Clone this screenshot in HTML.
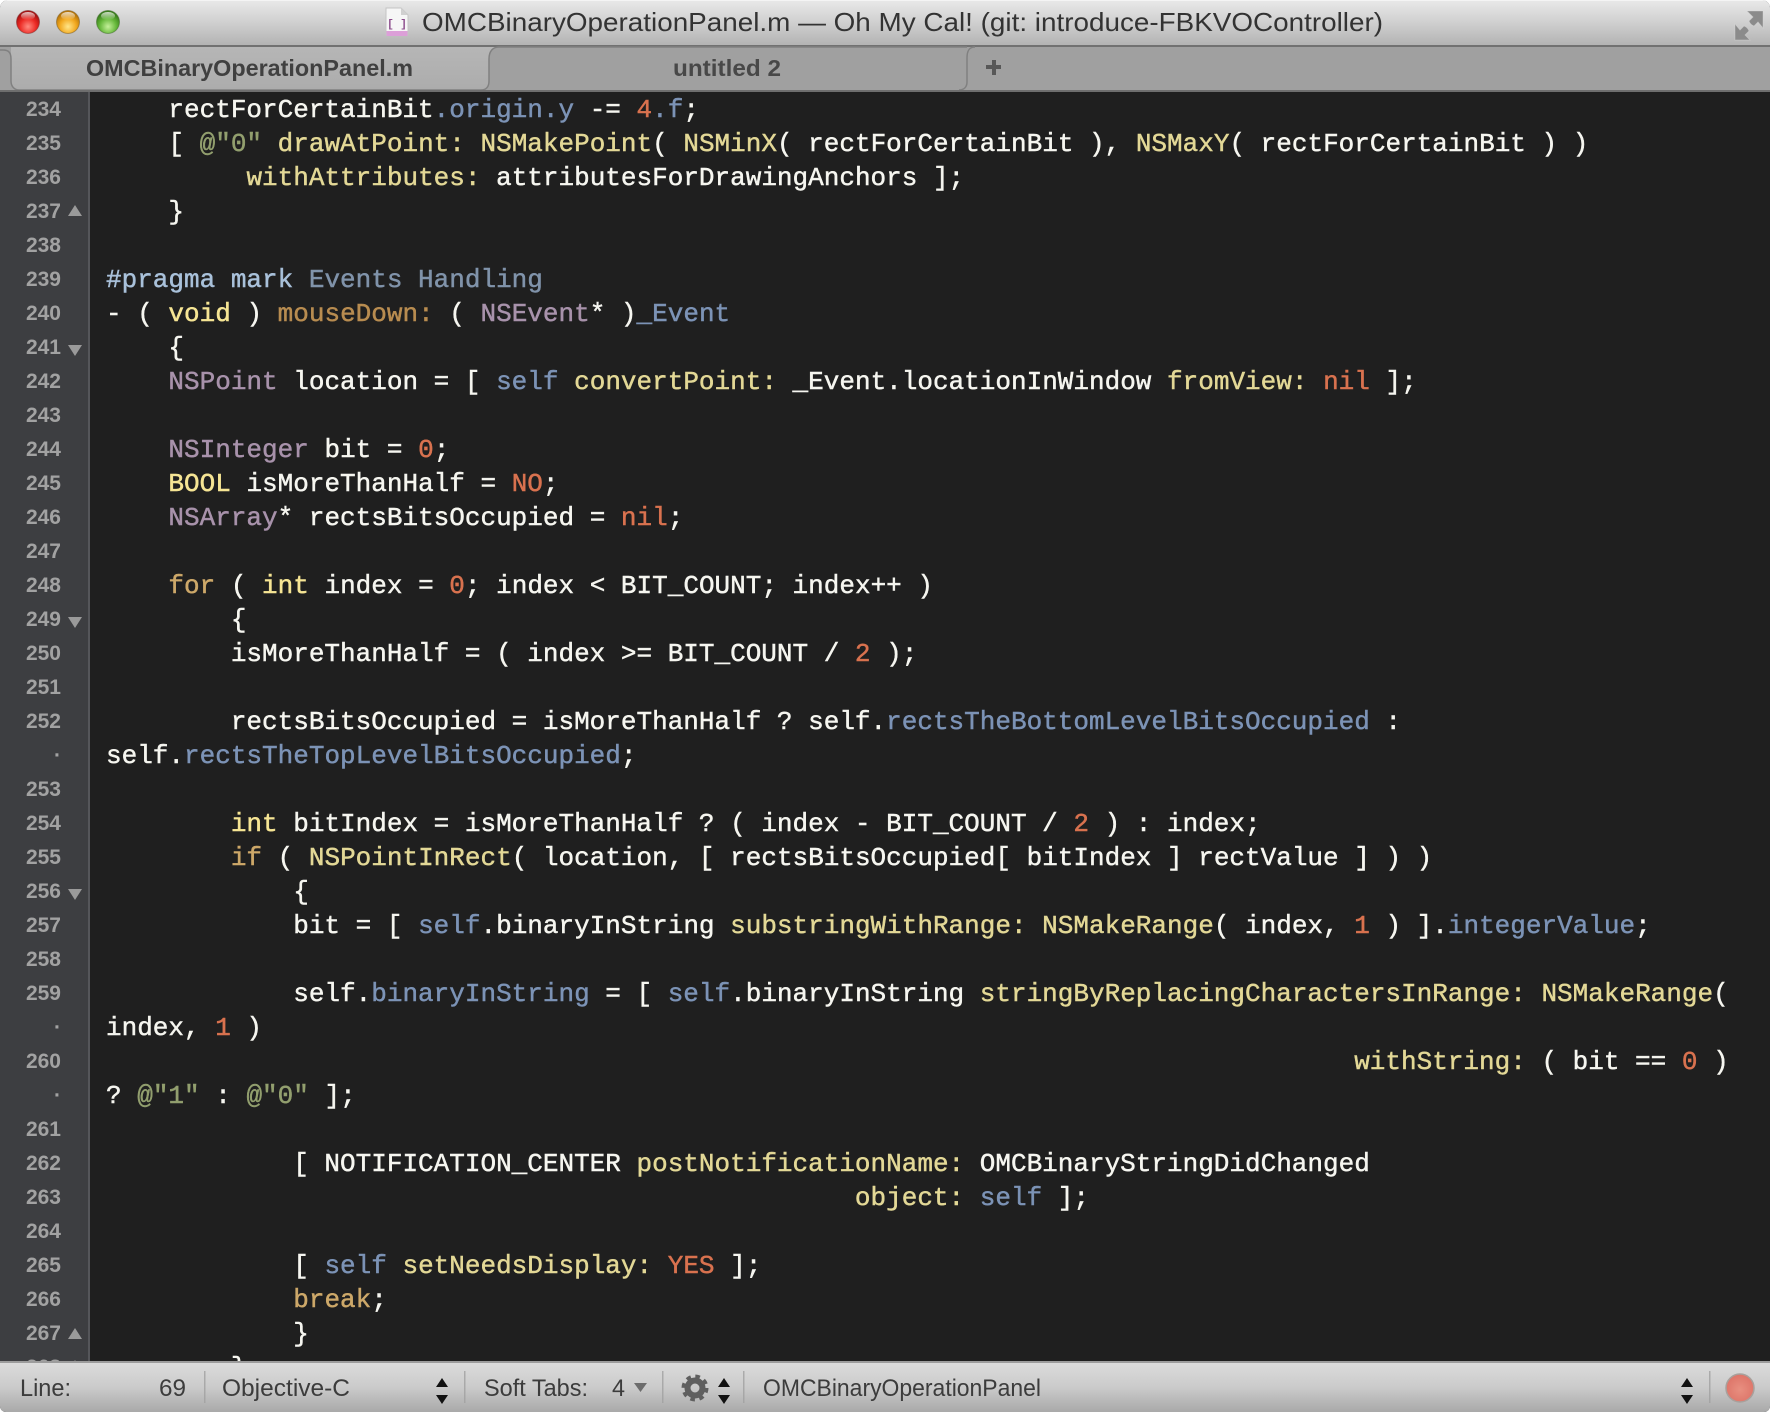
<!DOCTYPE html>
<html><head><meta charset="utf-8"><title>OMCBinaryOperationPanel.m</title>
<style>
html,body{margin:0;padding:0;background:#fff}
#w{position:relative;width:1770px;height:1412px;overflow:hidden;background:#1f1f1f;border-radius:8px 8px 6px 6px}
#g{position:absolute;left:0;top:91px;width:88px;height:1271px;background:#3d3e41;border-right:2px solid #55565a}
pre{margin:0;position:absolute;line-height:34px;white-space:pre}
#n{left:-1px;top:2px;width:62px;text-align:right;font:bold 21px/34px "Liberation Sans",sans-serif;color:#a2a2a2;filter:blur(.35px)}
#c{left:106px;top:93px;font-family:"Liberation Mono",monospace;font-size:26px;color:#f6f6f0;-webkit-text-stroke:.45px currentColor;filter:blur(.35px)}
.y{color:#e3d896}.k{color:#f6e594}.m{color:#b88c50}.p{color:#a892ab}.o{color:#d9724f}.b{color:#7c93b6}.s{color:#929f6e}.f{color:#cda869}.h{color:#a9c1da}.e{color:#8093aa}
svg{position:absolute;left:0;top:0}
.t{font-family:"Liberation Sans",sans-serif}
</style></head><body><div id="w">
<div id="g"><pre id="n">234
235
236
237
238
239
240
241
242
243
244
245
246
247
248
249
250
251
252
·
253
254
255
256
257
258
259
·
260
·
261
262
263
264
265
266
267
268</pre></div>
<pre id="c">    rectForCertainBit<span class="b">.origin.y</span> -= <span class="o">4</span><span class="b">.f</span>;
    [ <span class="s">@"0"</span> <span class="y">drawAtPoint: NSMakePoint</span>( <span class="y">NSMinX</span>( rectForCertainBit ), <span class="y">NSMaxY</span>( rectForCertainBit ) )
         <span class="y">withAttributes:</span> attributesForDrawingAnchors ];
    }

<span class="h">#pragma mark</span> <span class="e">Events Handling</span>
- ( <span class="k">void</span> ) <span class="m">mouseDown:</span> ( <span class="p">NSEvent</span>* )<span class="b">_Event</span>
    {
    <span class="p">NSPoint</span> location = [ <span class="b">self</span> <span class="y">convertPoint:</span> _Event.locationInWindow <span class="y">fromView:</span> <span class="o">nil</span> ];

    <span class="p">NSInteger</span> bit = <span class="o">0</span>;
    <span class="k">BOOL</span> isMoreThanHalf = <span class="o">NO</span>;
    <span class="p">NSArray</span>* rectsBitsOccupied = <span class="o">nil</span>;

    <span class="f">for</span> ( <span class="k">int</span> index = <span class="o">0</span>; index &lt; BIT_COUNT; index++ )
        {
        isMoreThanHalf = ( index &gt;= BIT_COUNT / <span class="o">2</span> );

        rectsBitsOccupied = isMoreThanHalf ? self.<span class="b">rectsTheBottomLevelBitsOccupied</span> :
self.<span class="b">rectsTheTopLevelBitsOccupied</span>;

        <span class="k">int</span> bitIndex = isMoreThanHalf ? ( index - BIT_COUNT / <span class="o">2</span> ) : index;
        <span class="f">if</span> ( <span class="y">NSPointInRect</span>( location, [ rectsBitsOccupied[ bitIndex ] rectValue ] ) )
            {
            bit = [ <span class="b">self</span>.binaryInString <span class="y">substringWithRange: NSMakeRange</span>( index, <span class="o">1</span> ) ].<span class="b">integerValue</span>;

            self.<span class="b">binaryInString</span> = [ <span class="b">self</span>.binaryInString <span class="y">stringByReplacingCharactersInRange: NSMakeRange</span>(
index, <span class="o">1</span> )
                                                                                <span class="y">withString:</span> ( bit == <span class="o">0</span> )
? <span class="s">@"1"</span> : <span class="s">@"0"</span> ];

            [ NOTIFICATION_CENTER <span class="y">postNotificationName:</span> OMCBinaryStringDidChanged
                                                <span class="y">object:</span> <span class="b">self</span> ];

            [ <span class="b">self</span> <span class="y">setNeedsDisplay:</span> <span class="o">YES</span> ];
            <span class="f">break</span>;
            }
        }</pre>
<svg width="1770" height="1412" viewBox="0 0 1770 1412">
<defs>
<linearGradient id="tb" x1="0" y1="0" x2="0" y2="1"><stop offset="0" stop-color="#e9e9e9"/><stop offset=".5" stop-color="#cfcfcf"/><stop offset="1" stop-color="#b2b2b2"/></linearGradient>
<linearGradient id="at" x1="0" y1="0" x2="0" y2="1"><stop offset="0" stop-color="#b6b6b6"/><stop offset="1" stop-color="#acacac"/></linearGradient>
<linearGradient id="sb" x1="0" y1="0" x2="0" y2="1"><stop offset="0" stop-color="#dcdcdc"/><stop offset=".5" stop-color="#cbcbcb"/><stop offset="1" stop-color="#a9a9a9"/></linearGradient>
<radialGradient id="r" cx=".5" cy=".7" r=".6"><stop offset="0" stop-color="#ff8a80"/><stop offset=".6" stop-color="#ec2a24"/><stop offset="1" stop-color="#a81212"/></radialGradient>
<radialGradient id="a" cx=".5" cy=".7" r=".6"><stop offset="0" stop-color="#ffe68a"/><stop offset=".6" stop-color="#f2a81e"/><stop offset="1" stop-color="#b8770a"/></radialGradient>
<radialGradient id="v" cx=".5" cy=".7" r=".6"><stop offset="0" stop-color="#c5f09a"/><stop offset=".6" stop-color="#66b83a"/><stop offset="1" stop-color="#3a7f1c"/></radialGradient>
<linearGradient id="sh" x1="0" y1="0" x2="0" y2="1"><stop offset="0" stop-color="#fff" stop-opacity=".75"/><stop offset="1" stop-color="#fff" stop-opacity="0"/></linearGradient>
<radialGradient id="rd" cx=".5" cy=".55" r=".55"><stop offset="0" stop-color="#e88f80"/><stop offset="1" stop-color="#dd7468"/></radialGradient>
</defs>
<!-- gutter fold triangles -->
<g fill="#9a9a9a">
<path d="M75 205l7 11H68z"/><path d="M68 345h14l-7 11z"/><path d="M68 617h14l-7 11z"/><path d="M68 889h14l-7 11z"/><path d="M75 1328l7 11H68z"/><path d="M75 1360l7 11H68z"/>
</g>
<!-- title bar -->
<rect width="1770" height="46" fill="url(#tb)"/>
<rect y="0" width="1770" height="1" fill="#f4f4f4"/>
<rect y="45" width="1770" height="2" fill="#717171"/>
<circle cx="28" cy="22" r="11.5" fill="url(#r)" stroke="#7a3030" stroke-opacity=".5"/><ellipse cx="28" cy="16" rx="7" ry="4" fill="url(#sh)"/>
<circle cx="68" cy="22" r="11.5" fill="url(#a)" stroke="#7a5a20" stroke-opacity=".5"/><ellipse cx="68" cy="16" rx="7" ry="4" fill="url(#sh)"/>
<circle cx="108" cy="22" r="11.5" fill="url(#v)" stroke="#3f6a2c" stroke-opacity=".5"/><ellipse cx="108" cy="16" rx="7" ry="4" fill="url(#sh)"/>
<path d="M386 8h15l7 7v20h-22z" fill="#f6f6f6" stroke="#c4c4c4"/><path d="M401 8v7h7z" fill="#d0d0d0"/><rect x="386.5" y="31" width="21" height="5" fill="#dc9fd8"/>
<text x="397" y="27" text-anchor="middle" font-family="Liberation Mono,monospace" font-size="11" font-weight="bold" fill="#8a4a8a">[ ]</text>
<text class="t" x="422" y="31" font-size="26" fill="#333" textLength="961" lengthAdjust="spacingAndGlyphs">OMCBinaryOperationPanel.m — Oh My Cal! (git: introduce-FBKVOController)</text>
<g fill="#8b8b8b" stroke="#dadada" stroke-opacity=".5" stroke-width=".8">
<path d="M1763 11v17l-5-6-4 4a8 8 0 0 1-5-5l4-4-6-6z"/>
<path d="M1735 40V24l5 6 4-4a8 8 0 0 1 5 5l-4 4 5 5z"/>
</g>
<!-- tab bar -->
<rect y="47" width="1770" height="44" fill="#a0a0a0"/>
<path d="M11 47v35c0 5 3 8 8 8h462c5 0 8-3 8-8V59c0-8 4-12 10-12z" fill="url(#at)"/>
<path d="M0 50h3c6 0 8 3 8 9v22c0 6 4 9 8 9h462c5 0 8-3 8-9V59c0-8 4-12 10-12h468" fill="none" stroke="#808080" stroke-width="1.5"/>
<path d="M975 47c-6 0-8 4-8 11v24c0 5-3 8-8 8" fill="none" stroke="#808080" stroke-width="1.5"/>
<rect y="90" width="1770" height="2" fill="#6e6e6e"/>
<text class="t" x="86" y="76" font-size="23" font-weight="bold" fill="#404040" textLength="327" lengthAdjust="spacingAndGlyphs">OMCBinaryOperationPanel.m</text>
<text class="t" x="673" y="76" font-size="23" font-weight="bold" fill="#484848" textLength="108" lengthAdjust="spacingAndGlyphs">untitled 2</text>
<path d="M992 60h4v5h5v4h-5v6h-4v-6h-6v-4h6z" fill="#585858"/>
<!-- status bar -->
<rect y="1362" width="1770" height="50" fill="url(#sb)"/>
<rect y="1361" width="1770" height="2" fill="#9c9c9c"/>
<g font-family="Liberation Sans,sans-serif" font-size="24" fill="#3c3c3c">
<text x="20" y="1396" textLength="51" lengthAdjust="spacingAndGlyphs">Line:</text>
<text x="159" y="1396" textLength="27" lengthAdjust="spacingAndGlyphs">69</text>
<text x="222" y="1396" textLength="128" lengthAdjust="spacingAndGlyphs">Objective-C</text>
<text x="484" y="1396" textLength="104" lengthAdjust="spacingAndGlyphs">Soft Tabs:</text>
<text x="612" y="1396" textLength="13" lengthAdjust="spacingAndGlyphs">4</text>
<text x="763" y="1396" textLength="278" lengthAdjust="spacingAndGlyphs">OMCBinaryOperationPanel</text>
</g>
<g fill="#111">
<path d="M442 1378l6 9h-12zM436 1395h12l-6 9z"/>
<path d="M724 1378l6 9h-12zM718 1395h12l-6 9z"/>
<path d="M1687 1378l6 9h-12zM1681 1395h12l-6 9z"/>
</g>
<path d="M634 1383h13l-6.500 9z" fill="#6c6c6c"/>
<g fill="#a0a0a0" fill-opacity=".8">
<rect x="204" y="1371" width="1.500" height="32"/><rect x="464" y="1371" width="1.500" height="32"/><rect x="662" y="1371" width="1.500" height="32"/><rect x="743" y="1371" width="1.500" height="32"/><rect x="1709" y="1371" width="1.500" height="32"/>
</g>
<circle cx="695" cy="1388" r="7.500" fill="none" stroke="#5f5f5f" stroke-width="6"/>
<circle cx="695" cy="1388" r="11.500" fill="none" stroke="#5f5f5f" stroke-width="4" stroke-dasharray="4.530 4.500"/>
<circle cx="1740" cy="1388" r="14" fill="url(#rd)" stroke="#a8a09c" stroke-width="1.500"/>
</svg>
</div></body></html>
